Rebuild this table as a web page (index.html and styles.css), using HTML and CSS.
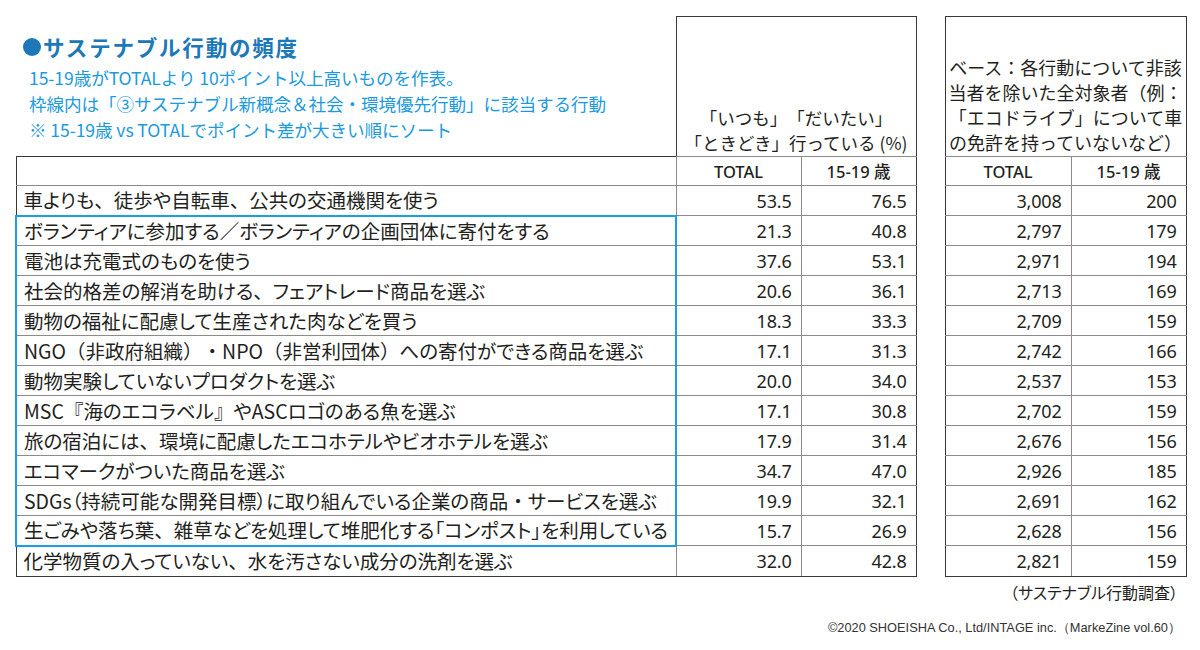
FILE: index.html
```html
<!DOCTYPE html>
<html lang="ja">
<head>
<meta charset="utf-8">
<link rel="stylesheet" href="styles.css">
</head>
<body>
<div class="page">
  <div class="tables">
    <table class="main">
      <colgroup><col class="c-label"><col class="c-n1"><col class="c-n2"></colgroup>
      <tr class="r-head">
        <td class="title-cell">
          <div class="title"><span class="dot"></span>サステナブル行動の頻度</div>
          <div class="sub">15-19歳がTOTALより 10ポイント以上高いものを作表。</div>
          <div class="sub">枠線内は「③サステナブル新概念＆社会・環境優先行動」に該当する行動</div>
          <div class="sub">※ 15-19歳 vs TOTALでポイント差が大きい順にソート</div>
        </td>
        <th class="hbox" colspan="2">「いつも」「だいたい」<br>「ときどき」行っている (%)</th>
      </tr>
      <tr class="r-sub">
        <td class="lab lab-empty"></td>
        <th class="sh">TOTAL</th>
        <th class="sh last">15-19 歳</th>
      </tr>
      <tr><td class="lab">車よりも<span class="fw">、</span>徒歩や自転車<span class="fw">、</span>公共の交通機関を使う</td><td class="num">53.5</td><td class="num last">76.5</td></tr>
      <tr><td class="lab b-top b-side">ボランティアに参加する<span class="fw">／</span>ボランティアの企画団体に寄付をする</td><td class="num">21.3</td><td class="num last">40.8</td></tr>
      <tr><td class="lab b-side">電池は充電式のものを使う</td><td class="num">37.6</td><td class="num last">53.1</td></tr>
      <tr><td class="lab b-side">社会的格差の解消を助ける<span class="fw">、</span>フェアトレード商品を選ぶ</td><td class="num">20.6</td><td class="num last">36.1</td></tr>
      <tr><td class="lab b-side">動物の福祉に配慮して生産された肉などを買う</td><td class="num">18.3</td><td class="num last">33.3</td></tr>
      <tr><td class="lab b-side">NGO<span class="fw">（</span>非政府組織<span class="fw">）・</span>NPO<span class="fw">（</span>非営利団体<span class="fw">）</span>への寄付ができる商品を選ぶ</td><td class="num">17.1</td><td class="num last">31.3</td></tr>
      <tr><td class="lab b-side">動物実験していないプロダクトを選ぶ</td><td class="num">20.0</td><td class="num last">34.0</td></tr>
      <tr><td class="lab b-side">MSC<span class="fw">『</span>海のエコラベル<span class="fw">』</span>やASCロゴのある魚を選ぶ</td><td class="num">17.1</td><td class="num last">30.8</td></tr>
      <tr><td class="lab b-side">旅の宿泊には<span class="fw">、</span>環境に配慮したエコホテルやビオホテルを選ぶ</td><td class="num">17.9</td><td class="num last">31.4</td></tr>
      <tr><td class="lab b-side">エコマークがついた商品を選ぶ</td><td class="num">34.7</td><td class="num last">47.0</td></tr>
      <tr><td class="lab b-side">SDGs（持続可能な開発目標）に取り組んでいる企業の商品<span class="fw">・</span>サービスを選ぶ</td><td class="num">19.9</td><td class="num last">32.1</td></tr>
      <tr><td class="lab b-side b-bot">生ごみや落ち葉<span class="fw">、</span>雑草などを処理して堆肥化する「コンポスト」を利用している</td><td class="num">15.7</td><td class="num last">26.9</td></tr>
      <tr class="r-last"><td class="lab">化学物質の入っていない<span class="fw">、</span>水を汚さない成分の洗剤を選ぶ</td><td class="num">32.0</td><td class="num last">42.8</td></tr>
    </table>

    <table class="base">
      <colgroup><col class="c-b1"><col class="c-b2"></colgroup>
      <tr class="r-head">
        <th class="hbox first" colspan="2">ベース：各行動について非該<br>当者を除いた全対象者（例：<br>「エコドライブ」について車<br>の免許を持っていないなど）</th>
      </tr>
      <tr class="r-sub"><th class="sh first">TOTAL</th><th class="sh last">15-19 歳</th></tr>
      <tr><td class="num first">3,008</td><td class="num last">200</td></tr>
      <tr><td class="num first">2,797</td><td class="num last">179</td></tr>
      <tr><td class="num first">2,971</td><td class="num last">194</td></tr>
      <tr><td class="num first">2,713</td><td class="num last">169</td></tr>
      <tr><td class="num first">2,709</td><td class="num last">159</td></tr>
      <tr><td class="num first">2,742</td><td class="num last">166</td></tr>
      <tr><td class="num first">2,537</td><td class="num last">153</td></tr>
      <tr><td class="num first">2,702</td><td class="num last">159</td></tr>
      <tr><td class="num first">2,676</td><td class="num last">156</td></tr>
      <tr><td class="num first">2,926</td><td class="num last">185</td></tr>
      <tr><td class="num first">2,691</td><td class="num last">162</td></tr>
      <tr><td class="num first">2,628</td><td class="num last">156</td></tr>
      <tr class="r-last"><td class="num first">2,821</td><td class="num last">159</td></tr>
    </table>
  </div>
  <div class="source">（サステナブル行動調査）</div>
  <div class="copy">©2020 SHOEISHA Co., Ltd/INTAGE inc.（MarkeZine vol.60）</div>
</div>
</body>
</html>
```

FILE: styles.css
```css
html, body {
  margin: 0;
  padding: 0;
  background: #ffffff;
}

body {
  font-family: "Noto Sans CJK JP", "Noto Sans", sans-serif;
  color: #231f20;
  text-spacing-trim: space-all;
}

.page {
  width: 1200px;
  height: 650px;
  padding: 16px 0 0 15px;
  box-sizing: border-box;
}

.tables {
  display: flex;
  align-items: flex-start;
  gap: 28px;
}

table {
  border-collapse: collapse;
  table-layout: fixed;
  border-spacing: 0;
}

.c-label { width: 660px; }
.c-n1 { width: 125px; }
.c-n2 { width: 115px; }
.c-b1 { width: 126px; }
.c-b2 { width: 115px; }

td, th {
  padding: 0;
  font-weight: normal;
}

.r-head { height: 140px; }
.r-sub { height: 29px; }
tr { height: 30px; }
.r-last { height: 31px; }

.title-cell {
  vertical-align: top;
  border: none;
  padding: 18px 0 0 7px;
}

.title {
  display: flex;
  align-items: center;
  font-size: 21.5px;
  font-weight: bold;
  color: #1c78b8;
  line-height: 24px;
  height: 24px;
  margin-bottom: 6px;
  letter-spacing: 1.8px;
}

.dot {
  width: 18px;
  height: 18px;
  border-radius: 50%;
  background: #1c78b8;
  margin-right: 2px;
  flex: none;
}

.sub {
  font-size: 17.6px;
  line-height: 26px;
  color: #1b9ade;
  white-space: nowrap;
  padding-left: 6px;
  letter-spacing: -0.1px;
}

.hbox {
  border: 1.5px solid #3a3536;
  border-bottom: 1px solid #8e8a8a;
  vertical-align: bottom;
  text-align: center;
  font-size: 17.5px;
  line-height: 25px;
  padding-bottom: 1px;
  white-space: nowrap;
}

.base .hbox {
  font-size: 18px;
  line-height: 25px;
}

.sh {
  font-family: "Noto Sans", "Noto Sans CJK JP", sans-serif;
  font-size: 16.5px;
  font-weight: 500;
  text-align: center;
  border: 1px solid #8e8a8a;
  vertical-align: middle;
}

.lab {
  border: 1px solid #8e8a8a;
  border-left: 1.5px solid #3a3536;
  font-size: 19.5px;
  line-height: 28px;
  padding-left: 7px;
  white-space: nowrap;
  font-feature-settings: "palt";
  vertical-align: middle;
}

.fw {
  font-feature-settings: normal;
}

.lab-empty {
  border-top: 1.5px solid #3a3536;
}

.num {
  font-family: "Noto Sans", sans-serif;
  font-size: 18px;
  text-align: right;
  padding-right: 9px;
  border: 1px solid #8e8a8a;
  vertical-align: middle;
  letter-spacing: -0.2px;
}

.last {
  border-right: 1.5px solid #3a3536;
}

.first {
  border-left: 1.5px solid #3a3536;
}

.r-last td {
  border-bottom: 1.5px solid #3a3536;
}

.b-side {
  border-left: 2px solid #1a9fe2;
  border-right: 2px solid #1a9fe2;
}

.b-top {
  border-top: 2px solid #1a9fe2;
}

.b-bot {
  border-bottom: 2px solid #1a9fe2;
}

.source {
  width: 1178px;
  text-align: right;
  margin-left: -15px;
  font-size: 16px;
  line-height: 20px;
  margin-top: 5px;
  font-feature-settings: "palt";
}

.copy {
  width: 1181px;
  margin-left: -15px;
  text-align: right;
  font-family: "Liberation Sans", Arial, sans-serif;
  font-size: 12.8px;
  line-height: 16px;
  margin-top: 18px;
  color: #333333;
}
```
